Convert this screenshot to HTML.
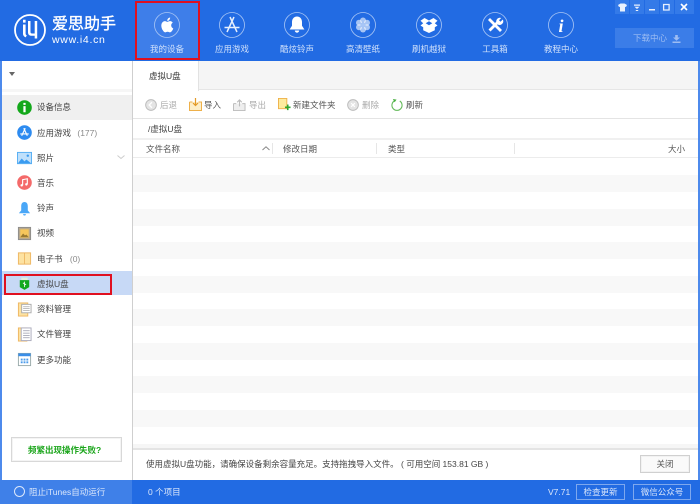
<!DOCTYPE html>
<html><head><meta charset="utf-8">
<style>
*{box-sizing:border-box;margin:0;padding:0}
html,body{width:700px;height:504px;overflow:hidden;background:#fff}
body{position:relative;font-family:"Liberation Sans","Noto Sans CJK SC",sans-serif;font-size:8.5px;color:#444}
.a{position:absolute}
.t{position:absolute;white-space:nowrap;line-height:12px}
.nav{position:absolute;top:2px;width:64px;height:58px;text-align:center;color:#cfe0fb}
.nav svg{position:absolute;left:19px;top:10px;width:26px;height:26px}
.nav span{position:absolute;left:0;width:64px;top:41px;line-height:12px;font-size:8.5px}
.side{position:absolute;left:37px;font-size:8.5px;line-height:12px;color:#444;white-space:nowrap}
.side i{font-style:normal;color:#8a8a8a;margin-left:4px}
.ic{position:absolute;left:17px;width:15px;height:15px}
.tb{position:absolute;top:99px;font-size:8.5px;line-height:12px;white-space:nowrap}
.st{position:absolute;left:133px;width:565px;height:17px;background:#f8f8f8}
</style></head><body>
<div class="a" style="left:0;top:0;width:700px;height:61px;background:#226be3"></div>
<div class="a" style="left:0;top:61px;width:2px;height:420px;background:#4d8aec"></div>
<div class="a" style="left:698px;top:61px;width:2px;height:420px;background:#4d8aec"></div>

<svg class="a" style="left:13px;top:13px" width="34" height="34" viewBox="0 0 34 34"><circle cx="17" cy="17" r="15" fill="none" stroke="#fff" stroke-width="1.800"/><path d="M10 6.800h2.600v2.800H10zM10 11.500h2.600v9c0 1 .4 1.500 1.200 1.800l-1 2c-1.800-.5-2.800-1.900-2.800-3.800zM15 8h2.500v11c0 1 .5 1.500 1.500 1.500h2.700V8h2.500v17.500h-2.500v-2.700H18.500c-2.200 0-3.500-1.300-3.500-3.500z" fill="#fff"/></svg>
<div class="t" style="left:52px;top:15px;font-size:16px;line-height:19px;color:#fff;-webkit-text-stroke:.35px #fff">爱思助手</div>
<div class="t" style="left:52px;top:34px;font-size:10.500px;color:#fff;letter-spacing:.7px">www.i4.cn</div>

<div class="a" style="left:135px;top:1px;width:65px;height:59px;background:#3e7ee9;border:2px solid #e01020"></div>

<div class="nav" style="left:135px"><svg viewBox="0 0 26 26"><circle cx="13" cy="13" r="12.500" fill="none" stroke="#a9c6f5" stroke-width=".8"/><g transform="translate(13 13) scale(1.200) translate(-13 -13.500)"><path d="M16.500 13.800c0-1.500 1.200-2.200 1.300-2.300-.7-1-1.800-1.200-2.200-1.200-1-.1-1.800.6-2.300.6s-1.200-.6-2-.6c-1 0-2 .6-2.500 1.500-1.100 1.900-.3 4.700.8 6.200.5.800 1.100 1.600 1.900 1.600s1.100-.5 2-.5 1.200.5 2 .5 1.400-.8 1.900-1.500c.6-.9.800-1.700.8-1.800 0 0-1.700-.6-1.700-2.500zM15 9.200c.4-.5.700-1.200.6-1.900-.6 0-1.300.4-1.800.9-.4.500-.7 1.200-.6 1.800.7.100 1.400-.3 1.800-.8z" fill="#fff"/></g></svg><span>我的设备</span></div>
<div class="nav" style="left:200px"><svg viewBox="0 0 26 26"><circle cx="13" cy="13" r="12.500" fill="none" stroke="#a9c6f5" stroke-width=".8"/><path d="M15 5L8 20M11 5l7 15M5.500 15.500h15" fill="none" stroke="#e6effd" stroke-width="1.500"/></svg><span>应用游戏</span></div>
<div class="nav" style="left:265px"><svg viewBox="0 0 26 26"><circle cx="13" cy="13" r="12.500" fill="none" stroke="#a9c6f5" stroke-width=".8"/><path d="M13 4.500c-3.300 0-5 2.700-5 5.500v3.800L5.600 17.500h14.800L18 13.800V10c0-2.800-1.700-5.500-5-5.500zM10.800 18.500a2.200 2.200 0 0 0 4.400 0z" fill="#fff"/></svg><span>酷炫铃声</span></div>
<div class="nav" style="left:331px"><svg viewBox="0 0 26 26"><circle cx="13" cy="13" r="12.500" fill="none" stroke="#a9c6f5" stroke-width=".8"/><g fill="#fff" fill-opacity=".6"><circle cx="13" cy="8.500" r="3"/><circle cx="13" cy="17.500" r="3"/><circle cx="9" cy="10.700" r="3"/><circle cx="17" cy="10.700" r="3"/><circle cx="9" cy="15.300" r="3"/><circle cx="17" cy="15.300" r="3"/></g><circle cx="13" cy="13" r="2" fill="#a8c6f6"/></svg><span>高清壁纸</span></div>
<div class="nav" style="left:397px"><svg viewBox="0 0 26 26"><circle cx="13" cy="13" r="12.500" fill="none" stroke="#a9c6f5" stroke-width=".8"/><path d="M8.500 6L13 8.500 17.500 6l4 2.800-2.700 2.400 2.700 2.300-2.700 1.700v3L13 21l-5.800-2.800v-3l-2.700-1.700 2.700-2.300-2.700-2.400zM13 9.300l-3.300 2 3.300 2 3.300-2z" fill="#fff"/></svg><span>刷机越狱</span></div>
<div class="nav" style="left:463px"><svg viewBox="0 0 26 26"><circle cx="13" cy="13" r="12.500" fill="none" stroke="#a9c6f5" stroke-width=".8"/><path d="M7 7l12 12" stroke="#fff" stroke-width="2.800" fill="none"/><path d="M7.500 18.500l8-8" stroke="#fff" stroke-width="2.800" fill="none"/><path d="M14.200 9.500a3.700 3.700 0 0 1 5-3.500l-2.200 2.200 1.500 1.500 2.300-2.200a3.700 3.700 0 0 1-5 5z" fill="#fff"/></svg><span>工具箱</span></div>
<div class="nav" style="left:529px"><svg viewBox="0 0 26 26"><circle cx="13" cy="13" r="12.500" fill="none" stroke="#a9c6f5" stroke-width=".8"/><text x="13" y="20" text-anchor="middle" font-family="Liberation Serif" font-style="italic" font-weight="bold" font-size="18" fill="#fff">i</text></svg><span>教程中心</span></div>

<div class="a" style="left:615px;top:0;width:14px;height:14px;background:#347ae8"></div>
<div class="a" style="left:630px;top:0;width:14px;height:14px;background:#347ae8"></div>
<div class="a" style="left:645px;top:0;width:14px;height:14px;background:#347ae8"></div>
<div class="a" style="left:660px;top:0;width:14px;height:14px;background:#347ae8"></div>
<div class="a" style="left:675px;top:0;width:19px;height:14px;background:#347ae8"></div>
<svg class="a" style="left:615px;top:0" width="80" height="14" viewBox="0 0 80 14"><path d="M3 5l2.500-1.500h4L12 5l-1 2-1-.3V11.500H5V6.700L4 7z" fill="#e8f0fd"/><path d="M19 4.500h6v1.200h-6zM19.500 6.800h5L22 9zM20.800 10h2.400v1h-2.400z" fill="#e8f0fd"/><path d="M34 9h6v1.500h-6z" fill="#e8f0fd"/><path d="M48.600 4.500h5.500v5.500h-5.500z" fill="none" stroke="#e8f0fd" stroke-width="1.300"/><path d="M66 4l6 6M72 4l-6 6" stroke="#fff" stroke-width="1.600"/></svg>

<div class="a" style="left:615px;top:28px;width:79px;height:20px;background:#3b7de8"></div>
<div class="t" style="left:633px;top:32px;color:#9dbdf3;font-size:8.500px">下载中心</div>
<svg class="a" style="left:672px;top:35px" width="9" height="8" viewBox="0 0 9 8"><path d="M3.200 0h2.600v2.500H8L4.500 5.700 1 2.500h2.200zM.5 6.500h8V8h-8z" fill="#9dbdf3"/></svg>

<!-- sidebar -->
<div class="a" style="left:132px;top:61px;width:1px;height:420px;background:#cfcfcf"></div>
<svg class="a" style="left:9px;top:72px" width="7" height="5"><path d="M0 0h6L3 4z" fill="#666"/></svg>
<div class="a" style="left:2px;top:89px;width:130px;height:3px;background:#f6f6f6"></div>
<div class="a" style="left:2px;top:95px;width:130px;height:25px;background:#f0f0f0"></div>

<svg class="ic" style="top:99.500px" viewBox="0 0 16 16"><circle cx="8" cy="8" r="7.800" fill="#13a81b"/><path d="M6.800 3h2.400v2.200H6.800zM6.800 6.500h2.400v6.500H6.800z" fill="#fff"/></svg>
<div class="side" style="top:101px">设备信息</div>
<svg class="ic" style="top:124.500px" viewBox="0 0 16 16"><circle cx="8" cy="8" r="7.800" fill="#2d8bf0"/><path d="M8.800 3.500L5 11.500M7.200 3.500l3.800 8M3.500 9.500h9" stroke="#fff" stroke-width="1.200" fill="none"/></svg>
<div class="side" style="top:127px">应用游戏<i> (177)</i></div>
<svg class="ic" style="top:150.500px" viewBox="0 0 16 16"><rect x=".5" y="1.500" width="15" height="12" fill="#bfe0fb" stroke="#55aef3"/><path d="M1 13l4-5 3 3 2-2 5 4z" fill="#3a9bf0"/><circle cx="11.500" cy="5" r="1.300" fill="#3a9bf0"/></svg>
<div class="side" style="top:152px">照片</div>
<svg class="a" style="left:117px;top:155px" width="8" height="5"><path d="M.5.500l3.500 3 3.500-3" stroke="#ccc" fill="none"/></svg>
<svg class="ic" style="top:174.500px" viewBox="0 0 16 16"><circle cx="8" cy="8" r="7.800" fill="#f46a6a"/><path d="M6 11V5l5-1v6" stroke="#fff" stroke-width="1.200" fill="none"/><circle cx="5" cy="11" r="1.300" fill="#fff"/><circle cx="10" cy="10" r="1.300" fill="#fff"/></svg>
<div class="side" style="top:177px">音乐</div>
<svg class="ic" style="top:200.500px" viewBox="0 0 16 16"><path d="M8 1C5.500 1 4.500 3 4.500 5.500V10L2 13h12l-2.500-3V5.500C11.500 3 10.500 1 8 1zM6.500 14a1.500 1.500 0 0 0 3 0z" fill="#4aa7f7"/></svg>
<div class="side" style="top:202px">铃声</div>
<svg class="ic" style="top:226px" viewBox="0 0 16 16"><rect x="1.500" y="1.500" width="13" height="13" fill="#b9a98c" stroke="#8c8c8c"/><rect x="3.500" y="3.500" width="9" height="9" fill="#f6c65b"/><path d="M3.500 12l3-4 2 2 1.500-1 2.500 3z" fill="#9a7a30"/></svg>
<div class="side" style="top:227px">视频</div>
<svg class="ic" style="top:250.500px" viewBox="0 0 16 16"><path d="M1.500 2h6.500v12H1.500zM8 2h6.500v12H8z" fill="#fde2a1" stroke="#eeb763"/></svg>
<div class="side" style="top:253px">电子书<i style="margin-left:5px"> (0)</i></div>

<div class="a" style="left:2px;top:271px;width:130px;height:24px;background:#c7d9f6"></div>
<div class="a" style="left:4px;top:274px;width:108px;height:21px;border:2px solid #e01020"></div>
<svg class="a" style="left:19px;top:277px;width:11px;height:14px" viewBox="0 0 14 16"><path d="M3 0h8v3H3z" fill="#e4f2df"/><path d="M1 3h12v9l-6 3.500L1 12z" fill="#12a81c"/><path d="M7 5v7M7 8l-2-1.500M7 9.500l2-1.500" stroke="#fff" fill="none"/></svg>
<div class="side" style="top:278px">虚拟U盘</div>

<svg class="ic" style="top:301.500px" viewBox="0 0 16 16"><rect x="1.500" y="1" width="10" height="14" fill="#fde2a1" stroke="#eeb763"/><rect x="5" y="2.500" width="10" height="9" fill="#fff" stroke="#aaa"/><path d="M6.500 5h7M6.500 7h7M6.500 9h7" stroke="#aaa" stroke-width=".8"/></svg>
<div class="side" style="top:303px">资料管理</div>
<svg class="ic" style="top:326.500px" viewBox="0 0 16 16"><rect x="1.500" y="1" width="9" height="14" fill="#fde2a1" stroke="#eeb763"/><rect x="4.500" y="1" width="10.500" height="13.500" fill="#fff" stroke="#aab"/><path d="M6.500 4h7M6.500 6.500h7M6.500 9h7M6.500 11.500h7" stroke="#99a" stroke-width=".8"/></svg>
<div class="side" style="top:328px">文件管理</div>
<svg class="ic" style="top:352px" viewBox="0 0 16 16"><rect x="1.500" y="1.500" width="13" height="13" fill="#fff" stroke="#9aa"/><rect x="1.500" y="1.500" width="13" height="3" fill="#3a8ee8"/><path d="M4 7h2v2H4zM7 7h2v2H7zM10 7h2v2h-2zM4 10h2v2H4zM7 10h2v2H7zM10 10h2v2h-2z" fill="#4a9bea"/></svg>
<div class="side" style="top:354px">更多功能</div>

<div class="a" style="left:11px;top:437px;width:111px;height:25px;border:1px solid #d8d8d8;box-shadow:inset 0 0 0 1px #f4f4f4"></div>
<div class="t" style="left:28px;top:444px;color:#1ba51b;font-weight:bold;font-size:8.500px">频繁出现操作失败?</div>

<!-- tab -->
<div class="a" style="left:133px;top:61px;width:565px;height:29px;background:#f5f5f5;border-bottom:1px solid #e6e6e6"></div>
<div class="a" style="left:133px;top:61px;width:66px;height:30px;background:#fff;border-right:1px solid #e2e2e2"></div>
<div class="t" style="left:149px;top:70px;color:#333">虚拟U盘</div>

<!-- toolbar -->
<svg class="a" style="left:145px;top:98.500px" width="12" height="12" viewBox="0 0 13 13"><circle cx="6.500" cy="6.500" r="5.800" fill="#e4e4e4" stroke="#bbb"/><path d="M7.500 3.500L4.500 6.500l3 3" stroke="#fff" stroke-width="1.400" fill="none"/></svg>
<div class="tb" style="left:160px;color:#aaa">后退</div>
<svg class="a" style="left:189px;top:98px" width="13" height="13" viewBox="0 0 13 13"><path d="M.5 4h3M9.500 4h3v8.500H.5V4" fill="#fdeec8" stroke="#eeb04a"/><path d="M6.500 0v7M4 5l2.500 2.500L9 5" stroke="#e39a28" fill="none" stroke-width="1.200"/></svg>
<div class="tb" style="left:204px;color:#555">导入</div>
<svg class="a" style="left:233px;top:98.500px" width="13" height="12" viewBox="0 0 14 13"><path d="M.5 5h3M10 5h3v7.500H.5V5" fill="#eee" stroke="#bbb"/><path d="M7 8V1M4.500 3.500L7 1l2.500 2.500" stroke="#bbb" fill="none" stroke-width="1.200"/></svg>
<div class="tb" style="left:249px;color:#aaa">导出</div>
<svg class="a" style="left:278px;top:98px" width="13" height="13" viewBox="0 0 14 14"><path d="M.5.500h9v11h-9z" fill="#fdeb9e" stroke="#eeb04a"/><path d="M10.500 7v6M7.500 10h6" stroke="#2fa52f" stroke-width="1.700"/></svg>
<div class="tb" style="left:293px;color:#555">新建文件夹</div>
<svg class="a" style="left:347px;top:98.500px" width="12" height="12" viewBox="0 0 13 13"><circle cx="6.500" cy="6.500" r="5.800" fill="#e4e4e4" stroke="#bbb"/><path d="M4.500 4.500l4 4M8.500 4.500l-4 4" stroke="#fff" stroke-width="1.300"/></svg>
<div class="tb" style="left:362px;color:#aaa">删除</div>
<svg class="a" style="left:391px;top:98px" width="12" height="13" viewBox="0 0 13 14"><path d="M3.500 3.200a5.500 5.500 0 1 0 6 0" fill="none" stroke="#66bb5c" stroke-width="1.200"/><path d="M2 1l4 .7L4 4.500z" fill="#46ae3e"/></svg>
<div class="tb" style="left:406px;color:#555">刷新</div>
<div class="a" style="left:133px;top:118px;width:565px;height:1px;background:#e4e4e4"></div>

<div class="t" style="left:148px;top:123px;color:#444">/虚拟U盘</div>
<div class="a" style="left:133px;top:138px;width:565px;height:2px;background:#f0f0f0"></div>

<!-- header -->
<div class="t" style="left:146px;top:143px;color:#555">文件名称</div>
<svg class="a" style="left:262px;top:146px" width="8" height="5"><path d="M.5 4L4 .8 7.500 4" stroke="#888" fill="none"/></svg>
<div class="a" style="left:272px;top:143px;width:1px;height:11px;background:#e6e6e6"></div>
<div class="t" style="left:283px;top:143px;color:#555">修改日期</div>
<div class="a" style="left:376px;top:143px;width:1px;height:11px;background:#e6e6e6"></div>
<div class="t" style="left:388px;top:143px;color:#555">类型</div>
<div class="a" style="left:514px;top:143px;width:1px;height:11px;background:#e6e6e6"></div>
<div class="t" style="left:668px;top:143px;color:#555">大小</div>
<div class="a" style="left:133px;top:157px;width:565px;height:1px;background:#ececec"></div>

<div class="st" style="top:175px"></div>
<div class="st" style="top:209px"></div>
<div class="st" style="top:242px"></div>
<div class="st" style="top:276px"></div>
<div class="st" style="top:309px"></div>
<div class="st" style="top:343px"></div>
<div class="st" style="top:376px"></div>
<div class="st" style="top:410px"></div>
<div class="a" style="left:133px;top:444px;width:565px;height:4px;background:#f6f6f6"></div>
<div class="a" style="left:133px;top:448px;width:565px;height:2px;background:#e4e4e4"></div>

<div class="t" style="left:146px;top:458px;color:#444;font-size:8.500px">使用虚拟U盘功能，请确保设备剩余容量充足。支持拖拽导入文件。 ( 可用空间 153.81 GB )</div>
<div class="a" style="left:640px;top:455px;width:50px;height:18px;border:1px solid #d0d0d0;background:#fafafa;box-shadow:inset 0 0 0 1px #f2f2f2;text-align:center;line-height:16px;color:#555">关闭</div>

<!-- footer -->
<div class="a" style="left:0;top:480px;width:700px;height:24px;background:#226be3"></div>
<div class="a" style="left:0;top:480px;width:132px;height:24px;background:#3f80e8"></div>
<div class="a" style="left:14px;top:486px;width:11px;height:11px;border:1px solid #dbe7fb;border-radius:50%"></div>
<div class="t" style="left:29px;top:486px;color:#dbe7fb;font-size:8.500px">阻止iTunes自动运行</div>
<div class="t" style="left:148px;top:486px;color:#dbe7fb">0 个项目</div>
<div class="t" style="left:548px;top:486px;color:#dbe7fb;font-size:8.500px">V7.71</div>
<div class="a" style="left:576px;top:484px;width:49px;height:16px;border:1px solid #7ea8ee;color:#dbe7fb;text-align:center;line-height:14px">检查更新</div>
<div class="a" style="left:633px;top:484px;width:58px;height:16px;border:1px solid #7ea8ee;color:#dbe7fb;text-align:center;line-height:14px">微信公众号</div>
</body></html>
